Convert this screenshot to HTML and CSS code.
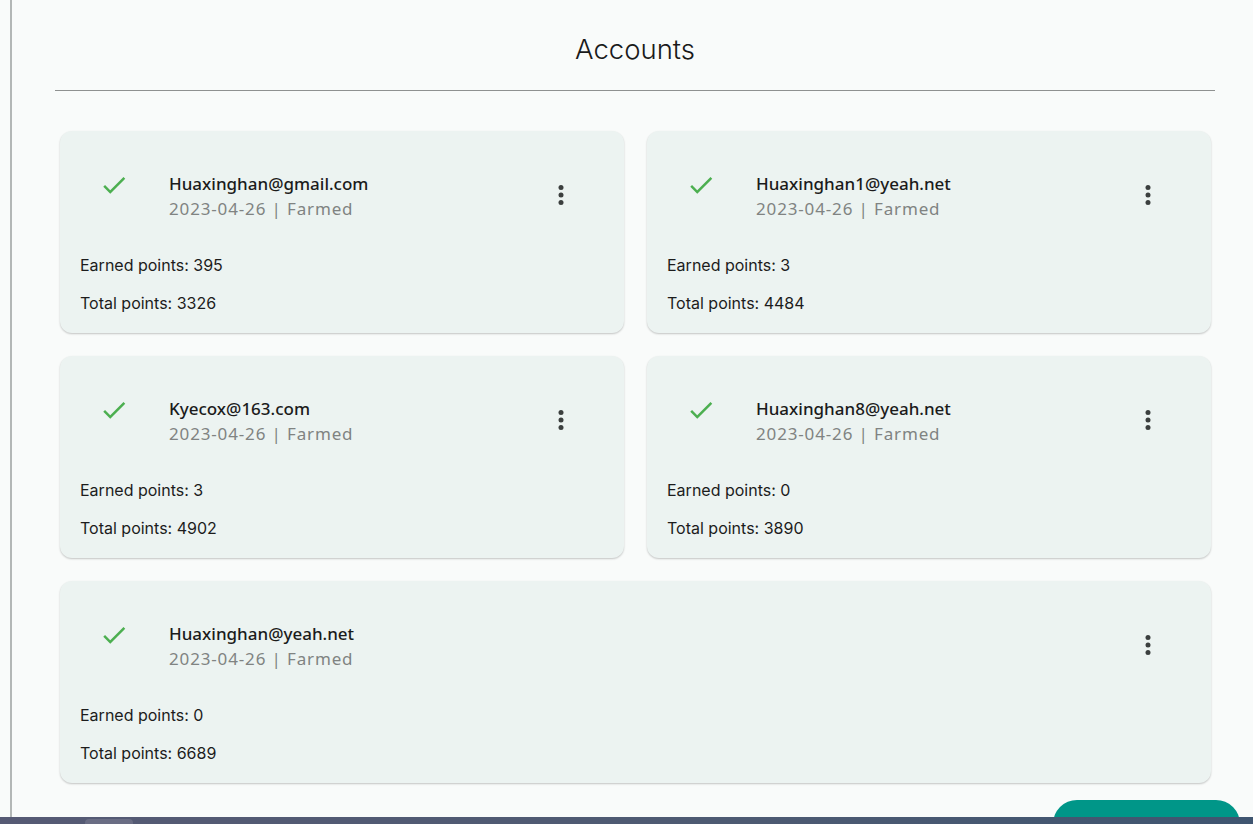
FILE: index.html
```html
<!DOCTYPE html>
<html lang="en">
<head>
<meta charset="utf-8">
<title>Accounts</title>
<link rel="stylesheet" href="styles.css">
</head>
<body>
<div class="layout">
  <div class="sidebar"></div>
  <main class="main">
    <h1 class="title">Accounts</h1>
    <div class="grid">
      <div class="card">
        <div class="card-head">
          <svg class="check" viewBox="0 0 24 24"><path d="M9 16.17L4.83 12l-1.42 1.41L9 19 21 7l-1.41-1.41z"/></svg>
          <div class="info">
            <div class="email">Huaxinghan@gmail.com</div>
            <div class="meta">2023-04-26 | Farmed</div>
          </div>
          <svg class="more" viewBox="0 0 24 24"><circle cx="12" cy="6" r="2"/><circle cx="12" cy="12" r="2"/><circle cx="12" cy="18" r="2"/></svg>
        </div>
        <p class="line earned">Earned points: 395</p>
        <p class="line">Total points: 3326</p>
      </div>
      <div class="card">
        <div class="card-head">
          <svg class="check" viewBox="0 0 24 24"><path d="M9 16.17L4.83 12l-1.42 1.41L9 19 21 7l-1.41-1.41z"/></svg>
          <div class="info">
            <div class="email">Huaxinghan1@yeah.net</div>
            <div class="meta">2023-04-26 | Farmed</div>
          </div>
          <svg class="more" viewBox="0 0 24 24"><circle cx="12" cy="6" r="2"/><circle cx="12" cy="12" r="2"/><circle cx="12" cy="18" r="2"/></svg>
        </div>
        <p class="line earned">Earned points: 3</p>
        <p class="line">Total points: 4484</p>
      </div>
      <div class="card">
        <div class="card-head">
          <svg class="check" viewBox="0 0 24 24"><path d="M9 16.17L4.83 12l-1.42 1.41L9 19 21 7l-1.41-1.41z"/></svg>
          <div class="info">
            <div class="email">Kyecox@163.com</div>
            <div class="meta">2023-04-26 | Farmed</div>
          </div>
          <svg class="more" viewBox="0 0 24 24"><circle cx="12" cy="6" r="2"/><circle cx="12" cy="12" r="2"/><circle cx="12" cy="18" r="2"/></svg>
        </div>
        <p class="line earned">Earned points: 3</p>
        <p class="line">Total points: 4902</p>
      </div>
      <div class="card">
        <div class="card-head">
          <svg class="check" viewBox="0 0 24 24"><path d="M9 16.17L4.83 12l-1.42 1.41L9 19 21 7l-1.41-1.41z"/></svg>
          <div class="info">
            <div class="email">Huaxinghan8@yeah.net</div>
            <div class="meta">2023-04-26 | Farmed</div>
          </div>
          <svg class="more" viewBox="0 0 24 24"><circle cx="12" cy="6" r="2"/><circle cx="12" cy="12" r="2"/><circle cx="12" cy="18" r="2"/></svg>
        </div>
        <p class="line earned">Earned points: 0</p>
        <p class="line">Total points: 3890</p>
      </div>
      <div class="card wide">
        <div class="card-head">
          <svg class="check" viewBox="0 0 24 24"><path d="M9 16.17L4.83 12l-1.42 1.41L9 19 21 7l-1.41-1.41z"/></svg>
          <div class="info">
            <div class="email">Huaxinghan@yeah.net</div>
            <div class="meta">2023-04-26 | Farmed</div>
          </div>
          <svg class="more" viewBox="0 0 24 24"><circle cx="12" cy="6" r="2"/><circle cx="12" cy="12" r="2"/><circle cx="12" cy="18" r="2"/></svg>
        </div>
        <p class="line earned">Earned points: 0</p>
        <p class="line">Total points: 6689</p>
      </div>
    </div>
  </main>
</div>
<button class="fab" type="button"></button>
<div class="taskbar"><span class="tab"></span></div>
</body>
</html>
```

FILE: styles.css
```css
html, body {
  margin: 0;
  padding: 0;
  background: #f9fbfa;
  overflow: hidden;
}

body {
  font-family: Inter, Roboto, "Liberation Sans", sans-serif;
  color: #1c1c1c;
}

.layout {
  display: flex;
  min-height: 824px;
}

.sidebar {
  width: 10px;
  flex: none;
  border-right: 2px solid #b3b7b6;
}

.main {
  flex: 1;
  padding: 0 38px 0 43px;
}

.title {
  margin: 0;
  padding: 31px 0 23px;
  font-size: 27.5px;
  font-weight: 300;
  line-height: 36px;
  text-align: center;
  color: #1a1a1a;
  border-bottom: 1px solid #8f9190;
}

.grid {
  display: grid;
  grid-template-columns: 1fr 1fr;
  gap: 23px;
  margin: 40px 4px 0 5px;
}

.card {
  background: #ecf3f1;
  border-radius: 12px;
  box-shadow: 0 1px 2px rgba(0, 0, 0, 0.22);
  padding: 40px 20px 19px;
  height: 202px;
  box-sizing: border-box;
}

.wide {
  grid-column: 1 / span 2;
}

.card-head {
  display: flex;
  align-items: center;
  height: 50px;
  padding-left: 19px;
}

.check {
  width: 30px;
  height: 30px;
  fill: #4caf50;
  align-self: flex-start;
  margin-top: -1px;
  flex: none;
}

.info {
  flex: 1;
  margin-left: 40px;
  font-family: "Noto Sans", "Open Sans", sans-serif;
  font-size: 17px;
  line-height: 25px;
}

.email {
  font-weight: 500;
  color: #1b1b1b;
}

.meta {
  color: #808382;
  letter-spacing: 0.85px;
}

.more {
  width: 30px;
  height: 30px;
  fill: #3b3f3e;
  margin: -3px 28px 0 0;
  flex: none;
}

.line {
  margin: 0;
  font-size: 16px;
  line-height: 22px;
}

.earned {
  margin: 33px 0 16px;
}

.fab {
  position: fixed;
  left: 1053px;
  top: 800px;
  width: 187px;
  height: 48px;
  border: none;
  border-radius: 24px;
  background: #009688;
}

.taskbar {
  position: fixed;
  left: 0;
  right: 0;
  bottom: 0;
  height: 7px;
  background: linear-gradient(90deg, #565a74, #4d5a72 60%, #3f5570);
}

.tab {
  position: absolute;
  left: 85px;
  top: 2px;
  width: 48px;
  height: 5px;
  border-radius: 4px 4px 0 0;
  background: #6a6d84;
}
```
